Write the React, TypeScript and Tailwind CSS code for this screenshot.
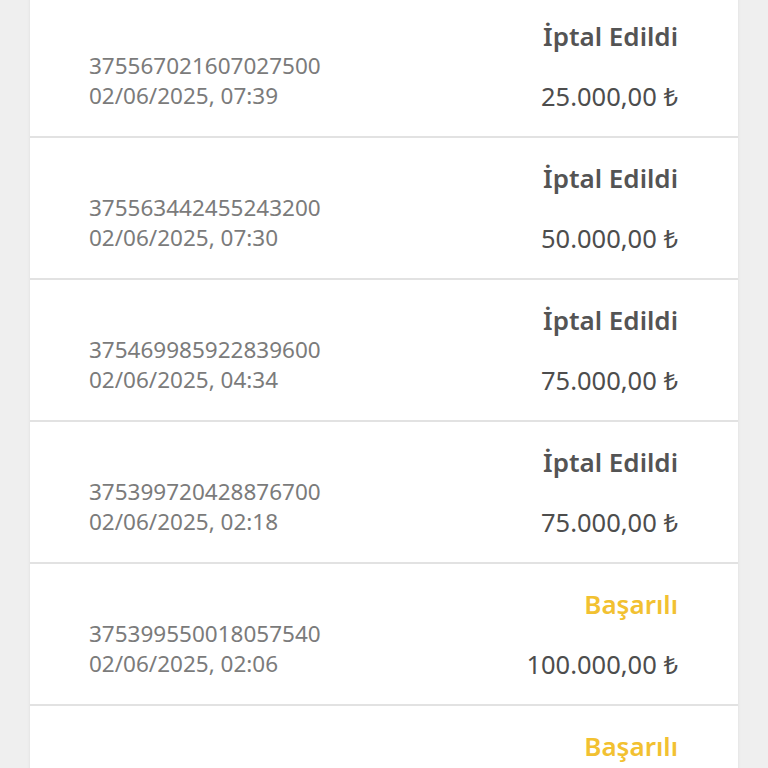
import React from "react";

type Row = { id: string; date: string; status: "cancel" | "ok"; amount: string };

const rows: Row[] = [
  { id: "375567021607027500", date: "02/06/2025, 07:39", status: "cancel", amount: "25.000,00 ₺" },
  { id: "375563442455243200", date: "02/06/2025, 07:30", status: "cancel", amount: "50.000,00 ₺" },
  { id: "375469985922839600", date: "02/06/2025, 04:34", status: "cancel", amount: "75.000,00 ₺" },
  { id: "375399720428876700", date: "02/06/2025, 02:18", status: "cancel", amount: "75.000,00 ₺" },
  { id: "375399550018057540", date: "02/06/2025, 02:06", status: "ok", amount: "100.000,00 ₺" },
  { id: "375398840017522180", date: "02/06/2025, 01:58", status: "ok", amount: "100.000,00 ₺" },
];

export default function App() {
  return (
    <div
      className="h-[768px] w-[768px] overflow-hidden bg-[#efefef]"
      style={{ fontFamily: '"Noto Sans", "Open Sans", sans-serif' }}
    >
      <div className="mx-[30px] -mt-[4px] bg-white shadow-[0_0_3px_rgba(0,0,0,0.08)]">
        {rows.map((r, i) => (
          <div
            key={i}
            className="flex h-[142px] justify-between border-b-2 border-[#e2e2e2] pl-[59px] pr-[60px]"
          >
            <div className="flex flex-col pt-[55px] text-[22.5px] leading-[30px] text-[#7b7b7b]">
              <span>{r.id}</span>
              <span>{r.date}</span>
            </div>
            <div className="flex flex-col items-end pt-[24px]">
              <span
                className={
                  r.status === "ok"
                    ? "text-[26px] leading-[32px] font-semibold text-[#f2c131]"
                    : "text-[26px] leading-[32px] font-semibold text-[#545454]"
                }
              >
                {r.status === "ok" ? "Başarılı" : "İptal Edildi"}
              </span>
              <span className="mt-[28px] text-[25.5px] leading-[32px] text-[#4d4d4d]">{r.amount}</span>
            </div>
          </div>
        ))}
      </div>
    </div>
  );
}
